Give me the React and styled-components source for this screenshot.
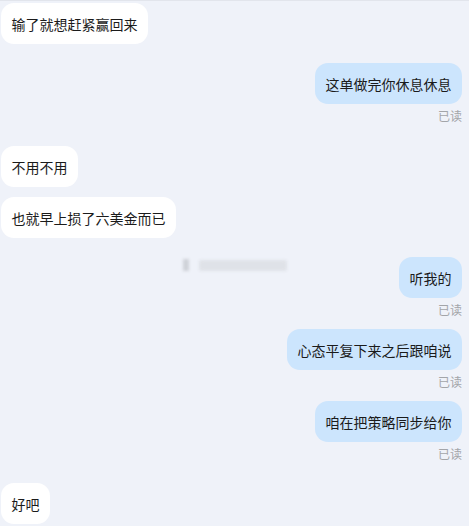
import React from "react";
import styled, { createGlobalStyle } from "styled-components";

const Global = createGlobalStyle`
  html, body { margin: 0; padding: 0; background: #eff2f9; }
  body { font-family: "Noto Sans CJK SC", "Noto Sans", sans-serif; }
`;

const Chat = styled.div`
  width: 469px;
  height: 526px;
  box-sizing: border-box;
  border-top: 1px solid #e2e5ec;
  padding: 2px 7px 0 1px;
  display: flex;
  flex-direction: column;
  overflow: hidden;
  background: #eff2f9;
`;

const Row = styled.div`
  display: flex;
  flex-direction: column;
  align-items: ${(p) => (p.$mine ? "flex-end" : "flex-start")};
  margin-top: ${(p) => p.$top || 0}px;
  position: relative;
`;

const Bubble = styled.div`
  background: ${(p) => (p.$mine ? "#cce5fd" : "#ffffff")};
  color: #1b1b1b;
  font-size: 14px;
  line-height: 20px;
  padding: 10.5px 10.5px;
  border-radius: 13px;
  white-space: nowrap;
  letter-spacing: 0;
`;

const Read = styled.div`
  font-size: 12px;
  line-height: 16px;
  color: #a3a5a9;
  margin-top: 4px;
`;

const Stamp = styled.div`
  position: absolute;
  left: 182px;
  top: 1px;
  display: flex;
  align-items: center;
  gap: 10px;
  height: 14px;
  filter: blur(1.8px);
`;

const StampTick = styled.div`
  width: 6px;
  height: 12px;
  background: #cfd2d8;
`;

const StampBar = styled.div`
  width: 88px;
  height: 11px;
  background: #dfe2e8;
  border-radius: 2px;
`;

const messages = [
  { text: "输了就想赶紧赢回来", top: 0 },
  { text: "这单做完你休息休息", mine: true, read: true, top: 19 },
  { text: "不用不用", top: 22 },
  { text: "也就早上损了六美金而已", top: 10 },
  { text: "听我的", mine: true, read: true, top: 19, stamp: true },
  { text: "心态平复下来之后跟咱说", mine: true, read: true, top: 11 },
  { text: "咱在把策略同步给你", mine: true, read: true, top: 11 },
  { text: "好吧", top: 21 },
];

export default function App() {
  return (
    <>
      <Global />
      <Chat>
        {messages.map((m, i) => (
          <Row key={i} $mine={m.mine} $top={m.top}>
            {m.stamp && (
              <Stamp>
                <StampTick />
                <StampBar />
              </Stamp>
            )}
            <Bubble $mine={m.mine}>{m.text}</Bubble>
            {m.read && <Read>已读</Read>}
          </Row>
        ))}
      </Chat>
    </>
  );
}
